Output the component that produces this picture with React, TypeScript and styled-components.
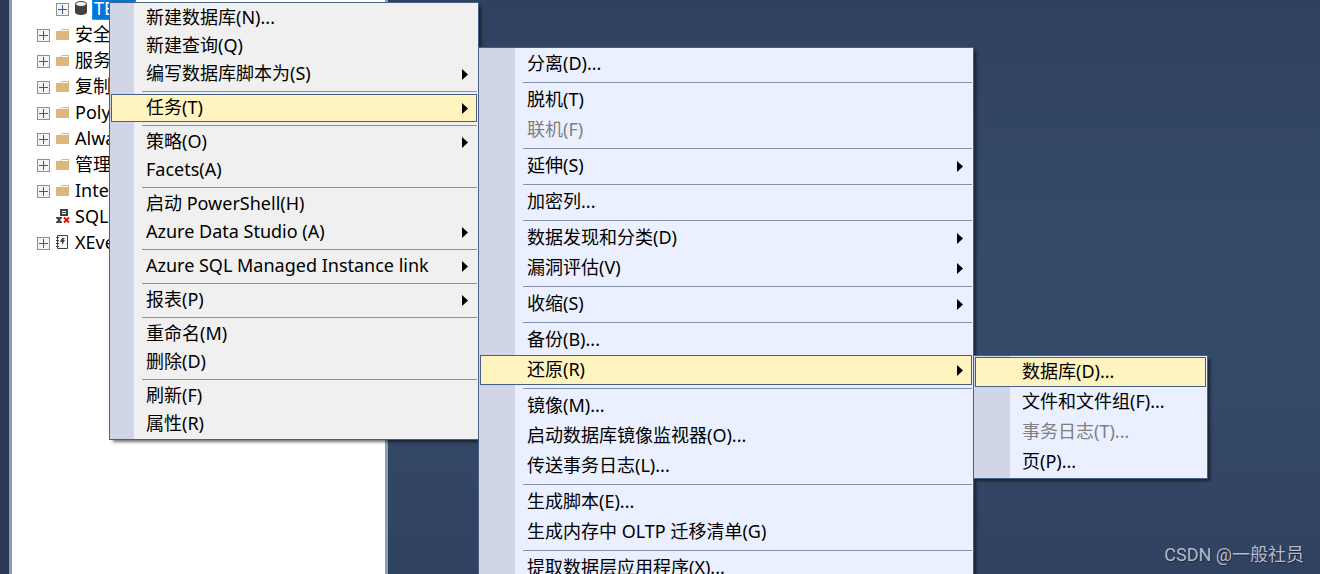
import React from 'react';
import styled, { createGlobalStyle, css } from 'styled-components';

const GlobalStyle = createGlobalStyle`
  * { box-sizing: border-box; }
  html, body { margin: 0; height: 100%; overflow: hidden; }
  body { font: 18px/28px "Noto Sans", "Noto Sans CJK SC", sans-serif; color: #000; }
  #root { height: 100%; }
  ul { list-style: none; margin: 0; padding: 0; }
`;

const Workspace = styled.div`
  position: relative;
  display: flex;
  height: 100%;
  overflow: hidden;
  background: linear-gradient(#2f4160, #354a69 45%, #354a69 60%, #304262);
`;

const Explorer = styled.nav`
  flex: none;
  width: 379px;
  margin-left: 9px;
  padding-left: 25px;
  border: solid #8e9bbc;
  border-width: 0 3px;
  background: #fff;
  outline: 9px solid #293955;
  clip-path: inset(0 0 0 -9px);
`;

const TreeRow = styled.li<{ $nested?: boolean }>`
  display: grid;
  grid-template-columns: 19px 16px auto;
  justify-content: start;
  align-items: center;
  height: 26px;
  > :not(button) { margin-bottom: 2px; }
  ${(p) => p.$nested && css`
    grid-template-columns: 19px 17px auto;
    padding-left: 19px;
    margin-top: -4px;
  `}
`;

const Expander = styled.button`
  display: block;
  width: 13px;
  height: 13px;
  padding: 0;
  border: 0;
  background: none;
  svg { display: block; }
`;

const TreeLabel = styled.span<{ $selected?: boolean }>`
  white-space: nowrap;
  line-height: 24px;
  padding: 0 3px;
  ${(p) => p.$selected && css`
    padding: 0 2px;
    color: #fff;
    background: #0078d7;
    outline: 1px dotted #e08a3a;
    outline-offset: -1px;
  `}
`;

const MenuPanel = styled.ul<{ $x: number; $y: number; $w: number; $sub?: boolean }>`
  --row: ${(p) => (p.$sub ? 30 : 28)}px;
  --gutter: ${(p) => (p.$sub ? 36 : 24)}px;
  position: absolute;
  left: ${(p) => p.$x}px;
  top: ${(p) => p.$y}px;
  width: ${(p) => p.$w}px;
  && { padding: 1px; }
  border: 1px solid #4a5f88;
  background: linear-gradient(90deg, #d0d6e6 var(--gutter), ${(p) => (p.$sub ? '#eaf0ff' : '#f0f0f0')} var(--gutter));
  box-shadow: 3px 3px 3px -1px rgba(0, 0, 0, 0.55);
`;

const MenuItem = styled.button<{ $active?: boolean }>`
  display: flex;
  align-items: center;
  justify-content: space-between;
  width: 100%;
  height: var(--row);
  padding: 0 8px 0 calc(var(--gutter) + 10px);
  border: 1px solid transparent;
  background: none;
  color: #000;
  font: inherit;
  text-align: left;
  white-space: nowrap;
  &:disabled { color: #808080; }
  ${(p) => p.$active && css`border-color: #4a5f88; background: #fff3bf;`}
`;

const ItemText = styled.span`
  padding-bottom: 2px;
`;

const Separator = styled.li`
  height: 1px;
  margin: 3px 0 2px calc(var(--gutter) + 7px);
  background: #8591ab;
`;

type Entry = '-' | { text: string; sub?: boolean; active?: boolean; disabled?: boolean };

const mainMenu: Entry[] = [
  { text: '新建数据库(N)...' },
  { text: '新建查询(Q)' },
  { text: '编写数据库脚本为(S)', sub: true },
  '-',
  { text: '任务(T)', sub: true, active: true },
  '-',
  { text: '策略(O)', sub: true },
  { text: 'Facets(A)' },
  '-',
  { text: '启动 PowerShell(H)' },
  { text: 'Azure Data Studio (A)', sub: true },
  '-',
  { text: 'Azure SQL Managed Instance link', sub: true },
  '-',
  { text: '报表(P)', sub: true },
  '-',
  { text: '重命名(M)' },
  { text: '删除(D)' },
  '-',
  { text: '刷新(F)' },
  { text: '属性(R)' },
];

const taskMenu: Entry[] = [
  { text: '分离(D)...' },
  '-',
  { text: '脱机(T)' },
  { text: '联机(F)', disabled: true },
  '-',
  { text: '延伸(S)', sub: true },
  '-',
  { text: '加密列...' },
  '-',
  { text: '数据发现和分类(D)', sub: true },
  { text: '漏洞评估(V)', sub: true },
  '-',
  { text: '收缩(S)', sub: true },
  '-',
  { text: '备份(B)...' },
  { text: '还原(R)', sub: true, active: true },
  '-',
  { text: '镜像(M)...' },
  { text: '启动数据库镜像监视器(O)...' },
  { text: '传送事务日志(L)...' },
  '-',
  { text: '生成脚本(E)...' },
  { text: '生成内存中 OLTP 迁移清单(G)' },
  '-',
  { text: '提取数据层应用程序(X)...' },
];

const restoreMenu: Entry[] = [
  { text: '数据库(D)...', active: true },
  { text: '文件和文件组(F)...' },
  { text: '事务日志(T)...', disabled: true },
  { text: '页(P)...' },
];

const Arrow = () => (
  <svg width="6" height="11" viewBox="0 0 6 11" aria-hidden="true">
    <path d="M0 0L6 5.500L0 11Z" fill="#000" />
  </svg>
);

function Menu({ entries, x, y, w, sub, label }: { entries: Entry[]; x: number; y: number; w: number; sub?: boolean; label: string }) {
  return (
    <MenuPanel $x={x} $y={y} $w={w} $sub={sub} role="menu" aria-label={label}>
      {entries.map((e, i) =>
        e === '-' ? (
          <Separator key={i} role="separator" />
        ) : (
          <li key={i} role="none">
            <MenuItem role="menuitem" $active={e.active} disabled={e.disabled} aria-haspopup={e.sub ? 'menu' : undefined}>
              <ItemText>{e.text}</ItemText>
              {e.sub && <Arrow />}
            </MenuItem>
          </li>
        ),
      )}
    </MenuPanel>
  );
}

const PlusBox = () => (
  <svg width="13" height="13" viewBox="0 0 13 13" shapeRendering="crispEdges" aria-hidden="true">
    <rect x="0.5" y="0.5" width="12" height="12" fill="#f3f3f3" stroke="#919191" />
    <path d="M2 6.500H11M6.500 2V11" stroke="#3b5798" fill="none" />
  </svg>
);

const FolderIcon = () => (
  <svg width="13" height="11" viewBox="0 0 13 11" aria-hidden="true">
    <path d="M0 2H4L6 0H13V11H0Z" fill="#dcb67a" />
    <path d="M5 2L6 1H12V2Z" fill="#fff" />
  </svg>
);

const DatabaseIcon = () => (
  <svg width="12" height="14" viewBox="0 0 12 14" aria-hidden="true">
    <path d="M0 3V11C0 15 12 15 12 11V3Z" fill="#424242" />
    <ellipse cx="6" cy="3" rx="5.500" ry="2.500" fill="#f0eff1" stroke="#424242" />
  </svg>
);

const AgentIcon = () => (
  <svg width="14" height="14" viewBox="0 0 14 14" aria-hidden="true">
    <path d="M4 0H12V7H4Z" fill="#424242" />
    <path d="M6 2.500H10M6 4.500H10" stroke="#fff" />
    <path d="M0 8H6V9L4 11L6 13V14H0V13L2 11L0 9Z" fill="#424242" />
    <path d="M8 8.500L13 13.500M13 8.500L8 13.500" stroke="#e51400" strokeWidth="2" />
  </svg>
);

const EventIcon = () => (
  <svg width="13" height="14" viewBox="0 0 13 14" aria-hidden="true">
    <path d="M1.500 0.500H11.500V13.500H1.500Z" fill="#f6f6f6" stroke="#424242" />
    <path d="M0 2.500H3M0 5.500H3M0 8.500H3M0 11.500H3" stroke="#424242" />
    <path d="M6 3H9L7 5H9L6 10V7H4Z" fill="#424242" />
  </svg>
);

const treeNodes: { text: string; icon: React.ReactNode; leaf?: boolean }[] = [
  { text: '安全性', icon: <FolderIcon /> },
  { text: '服务器', icon: <FolderIcon /> },
  { text: '复制', icon: <FolderIcon /> },
  { text: 'PolyBase', icon: <FolderIcon /> },
  { text: 'Always', icon: <FolderIcon /> },
  { text: '管理', icon: <FolderIcon /> },
  { text: 'Integr', icon: <FolderIcon /> },
  { text: 'SQL', icon: <AgentIcon />, leaf: true },
  { text: 'XEvent', icon: <EventIcon /> },
];

const Watermark = styled.div`
  position: absolute;
  right: 16px;
  bottom: 5px;
  font-family: Roboto, "Noto Sans CJK SC", sans-serif;
  color: #b4bac6;
  text-shadow: 1px 1px 1px #1c2840;
`;

export default function App() {
  return (
    <Workspace>
      <GlobalStyle />
      <Explorer aria-label="Object Explorer">
        <ul>
          <TreeRow $nested>
            <Expander aria-label="TEST"><PlusBox /></Expander>
            <DatabaseIcon />
            <TreeLabel $selected>TEST</TreeLabel>
          </TreeRow>
          {treeNodes.map((n) => (
            <TreeRow key={n.text}>
              {n.leaf ? <span /> : <Expander aria-label={n.text}><PlusBox /></Expander>}
              {n.icon}
              <TreeLabel>{n.text}</TreeLabel>
            </TreeRow>
          ))}
        </ul>
      </Explorer>
      <Menu entries={mainMenu} x={109} y={2} w={370} label="TEST" />
      <Menu entries={taskMenu} x={478} y={47} w={496} sub label="任务" />
      <Menu entries={restoreMenu} x={973} y={355} w={235} sub label="还原" />
      <Watermark>CSDN @一般社员</Watermark>
    </Workspace>
  );
}
